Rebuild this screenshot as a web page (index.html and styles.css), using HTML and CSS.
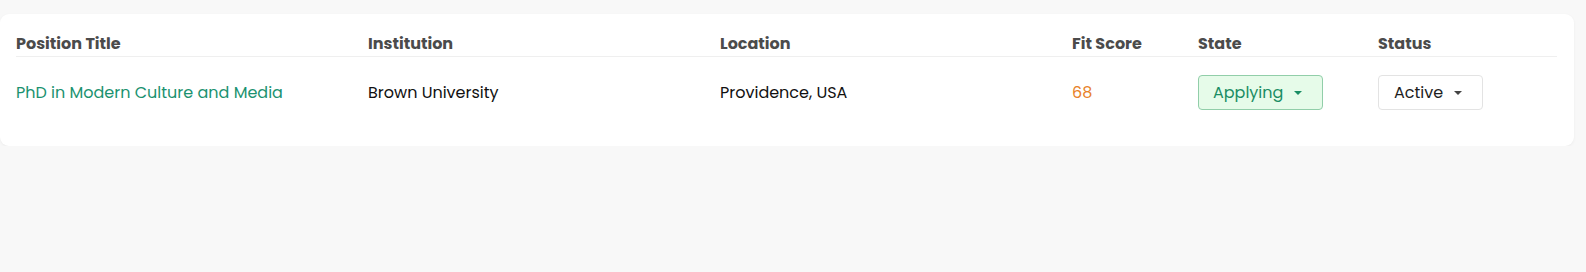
FILE: index.html
```html
<!DOCTYPE html>
<html>
<head>
<meta charset="utf-8">
<link rel="stylesheet" href="styles.css">
</head>
<body>
<div class="page">
  <div class="card">
    <div class="grid head">
      <div class="th">Position Title</div>
      <div class="th">Institution</div>
      <div class="th">Location</div>
      <div class="th">Fit Score</div>
      <div class="th">State</div>
      <div class="th">Status</div>
    </div>
    <div class="grid row">
      <div class="td title">PhD in Modern Culture and Media</div>
      <div class="td">Brown University</div>
      <div class="td">Providence, USA</div>
      <div class="td score">68</div>
      <div class="td"><button class="sel sel-state">Applying <span class="caret"></span></button></div>
      <div class="td"><button class="sel sel-status">Active <span class="caret"></span></button></div>
    </div>
  </div>
</div>
</body>
</html>
```
FILE: styles.css
```css
html, body { margin: 0; padding: 0; }
body {
  background: #f8f8f8;
  font-family: "Poppins", Inter, "Noto Sans", sans-serif;
}
.page { padding-top: 14px; }
.card {
  width: 1574px;
  box-sizing: border-box;
  background: #ffffff;
  border-radius: 9px;
  box-shadow: 0 1px 3px rgba(0,0,0,0.05);
  padding: 18px 17px 19px 16px;
}
.grid {
  display: grid;
  grid-template-columns: 352px 352px 352px 126px 180px 1fr;
}
.head {
  border-bottom: 1px solid #efefef;
}
.th {
  font-size: 16px;
  line-height: 24px;
  font-weight: 700;
  color: #4b4b4b;
}
.row { padding: 18px 0 17px; align-items: center; }
.td {
  font-size: 16px;
  line-height: 24px;
  color: #111111;
}
.title { color: #1b9270; }
.score { color: #e8822a; }
.sel {
  font-family: inherit;
  font-size: 16px;
  height: 35px;
  box-sizing: border-box;
  border-radius: 4px;
  display: inline-flex;
  align-items: center;
  gap: 11px;
  padding: 0 0 0 14px;
  cursor: pointer;
}
.sel-state {
  background: #e6fbe9;
  border: 1px solid #91cea9;
  color: #1a8d64;
  width: 125px;
}
.sel-status {
  background: #ffffff;
  border: 1px solid #e3e3e3;
  color: #1e1e1e;
  width: 105px;
  padding-left: 15px;
}
.caret {
  width: 0; height: 0;
  border-left: 4px solid transparent;
  border-right: 4px solid transparent;
  border-top: 4px solid currentColor;
}
.sel-status .caret { border-top-color: #444; }
```
